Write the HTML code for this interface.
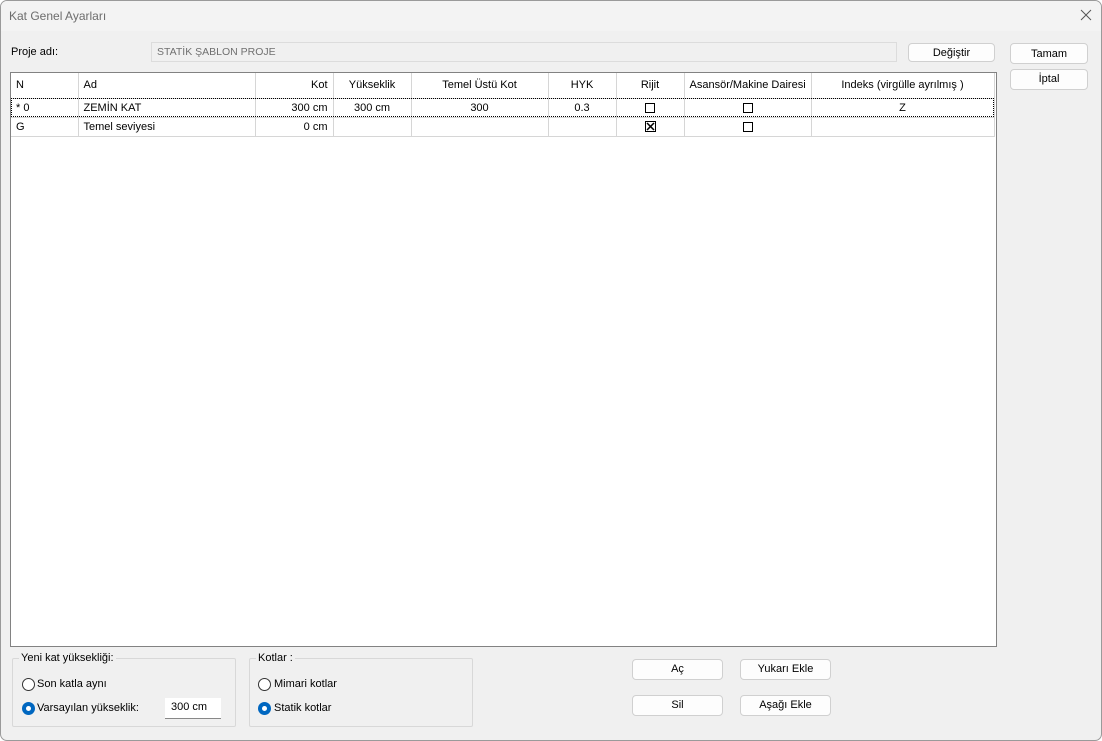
<!DOCTYPE html>
<html><head><meta charset="utf-8"><style>
*{box-sizing:border-box;margin:0;padding:0}
body{width:1102px;height:741px;background:#fff;font-family:"Liberation Sans",sans-serif;font-size:12px;color:#000;position:relative;overflow:hidden}
.win{position:absolute;left:0;top:0;width:1102px;height:741px;border:1px solid #9a9a9a;border-radius:7px;background:#f0f0f0;overflow:hidden}
.in{position:absolute;left:-1px;top:-1px;width:1102px;height:741px}
.title{position:absolute;left:0;top:0;width:100%;height:31px;background:#f3f3f3;color:#6d6d6d;font-size:12px;padding:9px 0 0 9px}
.a{position:absolute}
.btn{position:absolute;background:#fdfdfd;border:1px solid #d0d0d0;border-radius:4px;text-align:center;font-size:11px;line-height:18px}
table{border-collapse:collapse;position:absolute;left:11px;top:73px;table-layout:fixed;width:983px}
td{border:1px solid #d6d6d6;height:19px;font-size:11px;padding:0 5px;white-space:nowrap;overflow:hidden}
tr.h td{height:25px;border-top:none}
.c{text-align:center}.r{text-align:right}
.cb{display:inline-block;width:10px;height:10px;border:1px solid #000;vertical-align:middle;position:relative}
fieldset{position:absolute;border:1px solid #d8d8d8;border-radius:2px}
legend{font-size:11px;padding:0 2px;margin-left:6px}
.rad{position:absolute;width:13px;height:13px;border-radius:50%;border:1px solid #333;background:#fff}
.rad.on{background:#0067c0;border-color:#0067c0}
.rad.on::after{content:"";position:absolute;left:3px;top:3px;width:5px;height:5px;border-radius:50%;background:#fff}
.t{position:absolute;font-size:11px}
</style></head><body>
<div class="win"><div class="in">
<div class="title">Kat Genel Ayarları</div>
<svg class="a" style="left:1080px;top:9px" width="12" height="12"><path d="M1 1L11 11M11 1L1 11" stroke="#555" stroke-width="1"/></svg>
<div class="t" style="left:11px;top:46px">Proje adı:</div>
<div class="a" style="left:151px;top:42px;width:746px;height:20px;border:1px solid #dcdcdc;background:#f0f0f0;color:#707070;font-size:10.5px;padding:3px 5px">STATİK ŞABLON PROJE</div>
<div class="btn" style="left:908px;top:43px;width:87px;height:19px">Değiştir</div>
<div class="btn" style="left:1010px;top:43px;width:78px;height:21px;line-height:20px">Tamam</div>
<div class="btn" style="left:1010px;top:69px;width:78px;height:21px;line-height:18px">İptal</div>
<div class="a" style="left:10px;top:72px;width:987px;height:575px;border:1px solid #828282;background:#fff"></div>
<table>
<colgroup><col style="width:67px"><col style="width:177px"><col style="width:78px"><col style="width:78px"><col style="width:137px"><col style="width:68px"><col style="width:68px"><col style="width:127px"><col style="width:183px"></colgroup>
<tr class="h"><td style="border-left:none">N</td><td>Ad</td><td class="r">Kot</td><td class="c">Yükseklik</td><td class="c">Temel Üstü Kot</td><td class="c">HYK</td><td class="c">Rijit</td><td class="c">Asansör/Makine Dairesi</td><td class="c">Indeks (virgülle ayrılmış )</td></tr>
<tr style="outline:1px dotted #000;outline-offset:-1px"><td style="border-left:none">* 0</td><td>ZEMİN KAT</td><td class="r">300 cm</td><td class="c">300 cm</td><td class="c">300</td><td class="c">0.3</td><td class="c"><span class="cb"></span></td><td class="c"><span class="cb"></span></td><td class="c">Z</td></tr>
<tr><td style="border-left:none">G</td><td>Temel seviyesi</td><td class="r">0 cm</td><td></td><td></td><td></td><td class="c"><svg width="11" height="11" style="vertical-align:middle"><rect x="0.5" y="0.5" width="10" height="10" fill="none" stroke="#000"/><path d="M2 2L9 9M9 2L2 9" stroke="#000" stroke-width="1.5"/></svg></td><td class="c"><span class="cb"></span></td><td></td></tr>
</table>
<fieldset style="left:12px;top:652px;width:224px;height:75px"><legend>Yeni kat yüksekliği:</legend></fieldset>
<div class="rad" style="left:22px;top:678px"></div><div class="t" style="left:37px;top:678px">Son katla aynı</div>
<div class="rad on" style="left:22px;top:702px"></div><div class="t" style="left:37px;top:702px">Varsayılan yükseklik:</div>
<div class="a" style="left:165px;top:698px;width:56px;height:21px;background:#fff;border-bottom:1px solid #888;padding:3px 6px;font-size:11px">300 cm</div>
<fieldset style="left:249px;top:652px;width:224px;height:75px"><legend>Kotlar :</legend></fieldset>
<div class="rad" style="left:258px;top:678px"></div><div class="t" style="left:274px;top:678px">Mimari kotlar</div>
<div class="rad on" style="left:258px;top:702px"></div><div class="t" style="left:274px;top:702px">Statik kotlar</div>
<div class="btn" style="left:632px;top:659px;width:91px;height:21px">Aç</div>
<div class="btn" style="left:740px;top:659px;width:91px;height:21px">Yukarı Ekle</div>
<div class="btn" style="left:632px;top:695px;width:91px;height:21px">Sil</div>
<div class="btn" style="left:740px;top:695px;width:91px;height:21px">Aşağı Ekle</div>
</div></div>
</body></html>
